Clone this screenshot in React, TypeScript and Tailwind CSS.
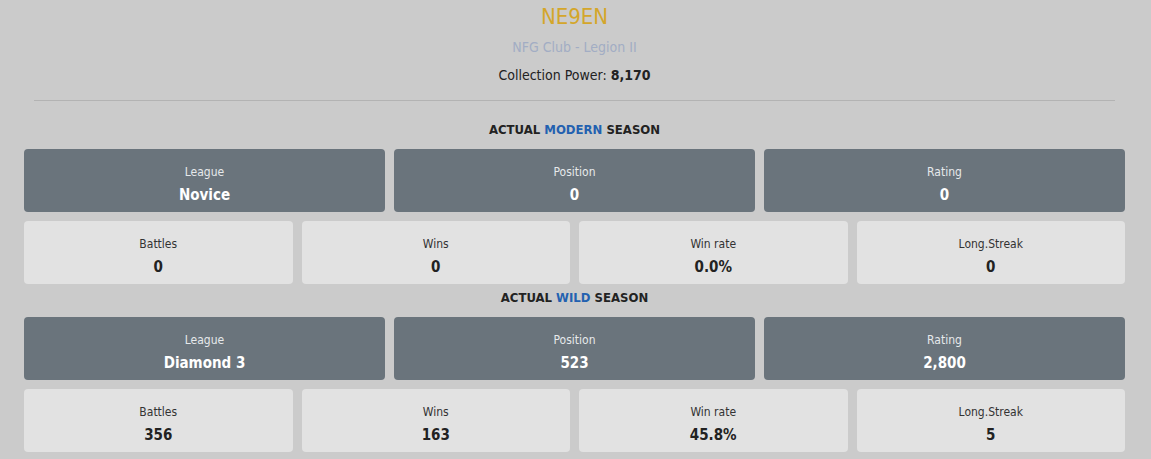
import React from 'react';

type Season = {
  name: string;
  league: string;
  position: string;
  rating: string;
  battles: string;
  wins: string;
  winRate: string;
  streak: string;
};

const seasons: Season[] = [
  { name: 'MODERN', league: 'Novice', position: '0', rating: '0', battles: '0', wins: '0', winRate: '0.0%', streak: '0' },
  { name: 'WILD', league: 'Diamond 3', position: '523', rating: '2,800', battles: '356', wins: '163', winRate: '45.8%', streak: '5' },
];

const font = { fontFamily: '"DejaVu Sans Condensed", "DejaVu Sans", sans-serif', fontStretch: 'condensed' as const };

const App: React.FC = () => {
  return (
    <div className="min-h-[459px] bg-[#cbcbcb] pl-[24px] pr-[26px]" style={font}>
      <div className="flex flex-col items-center pt-[3px]">
        <h1 className="text-[22px] leading-[28px] text-[#d4a62a]">NE9EN</h1>
        <p className="mt-[6px] text-[14px] leading-[20px] text-[#a2adc4]">NFG Club - Legion II</p>
        <p className="mt-[8px] text-[14px] leading-[20px] text-[#222]">
          Collection Power: <span className="font-bold">8,170</span>
        </p>
      </div>
      <hr className="mx-[10px] mt-[15px] border-t border-[#b3b3b3]" />

      {seasons.map((s, i) => (
        <div key={s.name}>
          <h2 className={`text-center text-[13px] leading-[20px] font-bold text-[#222] mb-[9px] ${i === 0 ? 'mt-[19px]' : 'mt-[4px]'}`}>
            ACTUAL <span className="text-[#2361b0]">{s.name}</span> SEASON
          </h2>
          <div className="grid grid-cols-3 gap-[9px]">
            {[
              { label: 'League', value: s.league },
              { label: 'Position', value: s.position },
              { label: 'Rating', value: s.rating },
            ].map((c) => (
              <div key={c.label} className="h-[63px] pt-[8px] rounded-[4px] bg-[#6a747c] flex flex-col items-center justify-center">
                <span className="text-[12px] leading-[16px] text-[#e6e9eb]">{c.label}</span>
                <span className="mt-[5px] text-[15px] leading-[20px] font-bold text-white">{c.value}</span>
              </div>
            ))}
          </div>
          <div className="grid grid-cols-4 gap-[9px] mt-[9px]">
            {[
              { label: 'Battles', value: s.battles },
              { label: 'Wins', value: s.wins },
              { label: 'Win rate', value: s.winRate },
              { label: 'Long.Streak', value: s.streak },
            ].map((c) => (
              <div key={c.label} className="h-[63px] pt-[8px] rounded-[4px] bg-[#e2e2e2] flex flex-col items-center justify-center">
                <span className="text-[12px] leading-[16px] text-[#333]">{c.label}</span>
                <span className="mt-[5px] text-[15px] leading-[20px] font-bold text-[#222]">{c.value}</span>
              </div>
            ))}
          </div>
        </div>
      ))}
    </div>
  );
};

export default App;
